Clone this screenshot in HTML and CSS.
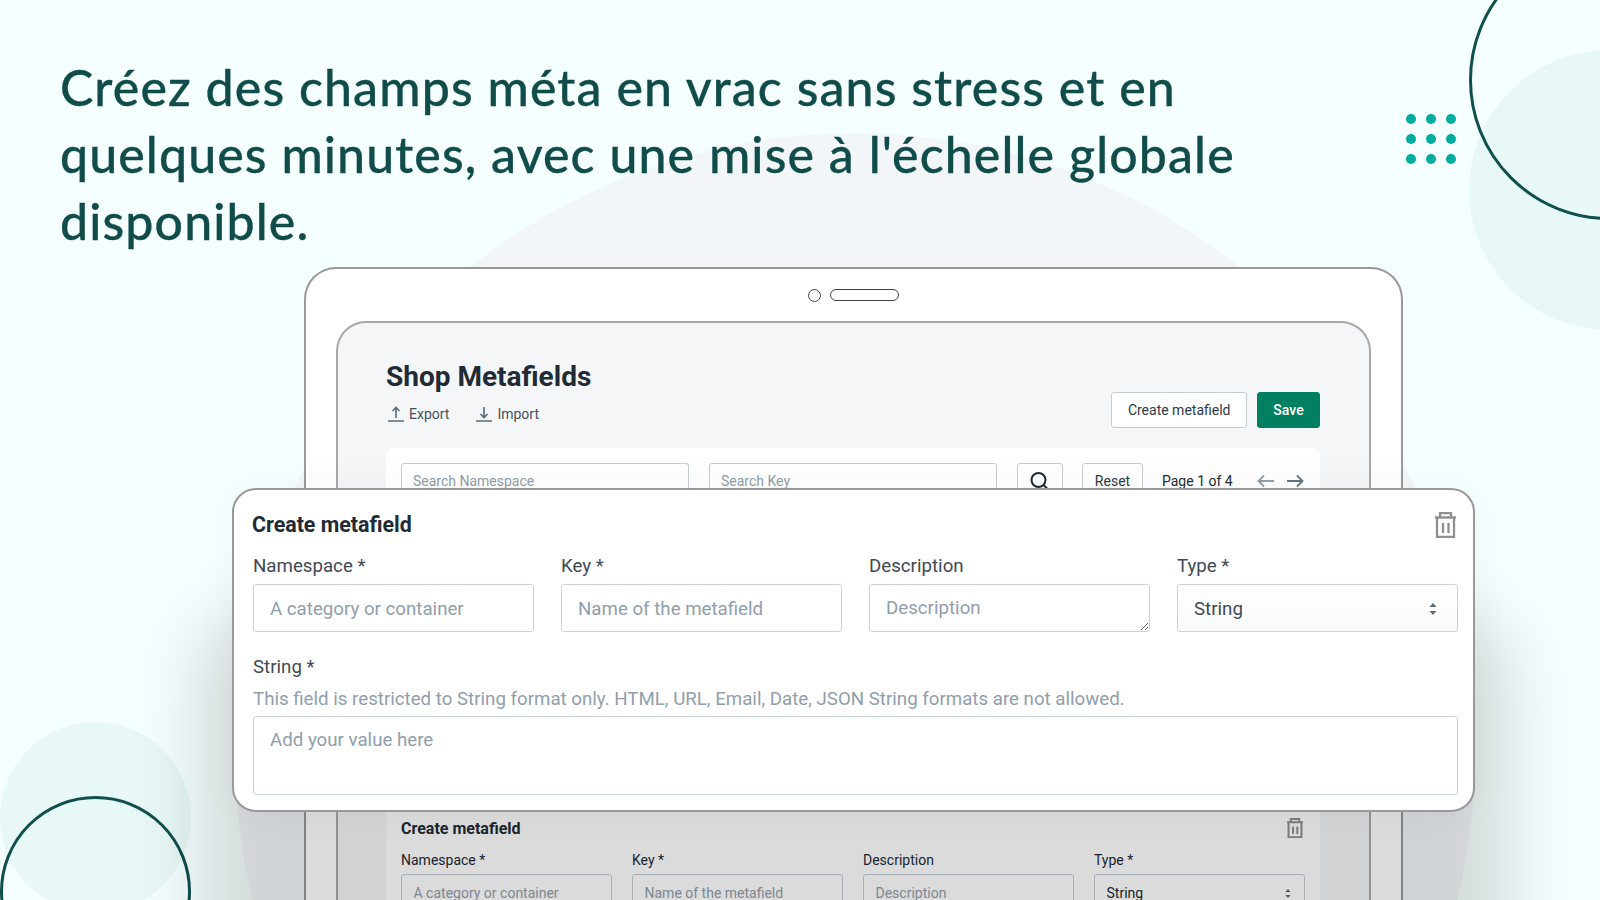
FILE: index.html
```html
<!DOCTYPE html>
<html lang="fr">
<head>
<meta charset="utf-8">
<title>Créez des champs méta</title>
<link rel="stylesheet" href="styles.css">
</head>
<body>
<main class="stage">
  <div class="blob blob-center"></div>
  <div class="blob blob-tr"></div>
  <div class="ring ring-tr"></div>
  <div class="blob blob-bl"></div>
  <div class="ring ring-bl"></div>
  <div class="dots">
    <i></i><i></i><i></i><i></i><i></i><i></i><i></i><i></i><i></i>
  </div>

  <h1 class="headline">Créez des champs méta en vrac sans stress et en quelques minutes, avec une mise à l'échelle globale disponible.</h1>

  <section class="device">
    <div class="notch"><span class="cam"></span><span class="speaker"></span></div>
    <div class="screen">
      <header class="page-head">
        <div>
          <h2 class="page-title">Shop Metafields</h2>
          <div class="actions">
            <span class="action">
              <svg class="action-icon" viewBox="0 0 16 16"><path d="M0 15h16M8 12V1.500M4.500 5 8 1.500 11.500 5"/></svg>Export
            </span>
            <span class="action">
              <svg class="action-icon" viewBox="0 0 16 16"><path d="M0 15h16M8 1v10.500M4.500 8 8 11.500 11.500 8"/></svg>Import
            </span>
          </div>
        </div>
        <div class="head-buttons">
          <button class="btn">Create metafield</button>
          <button class="btn btn-primary">Save</button>
        </div>
      </header>
      <div class="card">
        <div class="toolbar">
          <input class="search" placeholder="Search Namespace">
          <input class="search" placeholder="Search Key">
          <button class="btn btn-icon">
            <svg class="search-icon" viewBox="0 0 20 20"><circle cx="9.500" cy="9" r="7"/><path d="m14.500 14 4 4"/></svg>
          </button>
          <button class="btn btn-reset">Reset</button>
          <span class="pager">Page 1 of 4</span>
          <svg class="arrow arrow-off" viewBox="0 0 18 14"><path d="M17 7H1.500M7 1.500 1.500 7 7 12.500"/></svg>
          <svg class="arrow" viewBox="0 0 18 14"><path d="M1 7h15.500M11 1.500 16.500 7 11 12.500"/></svg>
        </div>
        <div class="entry">
          <div class="entry-head">
            <h3 class="entry-title">Create metafield</h3>
            <svg class="trash trash-sm" viewBox="0 0 21 26"><path d="M0 5.500h21M2 5.500V25h17V5.500M5 5.500V1.200h11v4.300M8 11v10M13.500 11v10"/></svg>
          </div>
          <div class="entry-grid">
            <label class="entry-field">Namespace *<input class="entry-input" placeholder="A category or container"></label>
            <label class="entry-field">Key *<input class="entry-input" placeholder="Name of the metafield"></label>
            <label class="entry-field">Description<input class="entry-input" placeholder="Description"></label>
            <div class="entry-field">Type *
              <div class="entry-input entry-select">String
                <svg class="updown" viewBox="0 0 8 14"><path d="M4 1 7.500 5H.5zM4 13 .5 9h7z"/></svg>
              </div>
            </div>
          </div>
        </div>
      </div>
    </div>
  </section>

  <section class="modal">
    <div class="modal-head">
      <h3 class="modal-title">Create metafield</h3>
      <svg class="trash" viewBox="0 0 21 26"><path d="M0 5.500h21M2 5.500V25h17V5.500M5 5.500V1.200h11v4.300M8 11v10M13.500 11v10"/></svg>
    </div>
    <div class="modal-grid">
      <label class="field">Namespace *<input class="control" placeholder="A category or container"></label>
      <label class="field">Key *<input class="control" placeholder="Name of the metafield"></label>
      <label class="field">Description<textarea class="control control-area" placeholder="Description"></textarea></label>
      <div class="field">Type *
        <div class="control control-select">String
          <svg class="updown" viewBox="0 0 8 14"><path d="M4 1 7.500 5H.5zM4 13 .5 9h7z"/></svg>
        </div>
      </div>
    </div>
    <label class="field field-wide">String *
      <span class="help">This field is restricted to String format only. HTML, URL, Email, Date, JSON String formats are not allowed.</span>
      <textarea class="control control-value" placeholder="Add your value here"></textarea>
    </label>
  </section>
</main>
</body>
</html>
```
FILE: styles.css
```css
* { box-sizing: border-box; }
html, body { margin: 0; padding: 0; }
body { font-family: Roboto, "Liberation Sans", sans-serif; color: #212b36; }

.stage {
  position: relative;
  width: 1600px;
  height: 900px;
  overflow: hidden;
  background: #f6ffff;
  padding-top: 54px;
}

/* decoration */
.blob, .ring { position: absolute; border-radius: 50%; }
.blob-center { left: 235px; top: 133px; width: 1240px; height: 1240px; background: #f2f6f9; }
.blob-tr { left: 1469px; top: 50px; width: 280px; height: 280px; background: #e7f8f7; }
.ring-tr { left: 1469px; top: -60px; width: 280px; height: 280px; border: 3px solid #0f4f4c; }
.blob-bl { left: 0; top: 722px; width: 191px; height: 191px; background: #e7f8f7; }
.ring-bl { left: 0; top: 796px; width: 191px; height: 191px; border: 3px solid #0f4f4c; }
.dots {
  position: absolute;
  left: 1406px;
  top: 114px;
  display: grid;
  grid-template-columns: repeat(3, 10px);
  gap: 9.800px;
}
.dots i { width: 10px; height: 10px; border-radius: 50%; background: #00ac9f; }

/* headline */
.headline {
  position: relative;
  margin: 0 0 0 60px;
  width: 1240px;
  font-family: Lato, "Open Sans", sans-serif;
  font-weight: 500;
  font-size: 50px;
  line-height: 67px;
  letter-spacing: 1.120px;
  -webkit-text-stroke: .3px #0f4c4a;
  color: #0f4c4a;
}

/* device */
.device {
  position: relative;
  width: 1099px;
  height: 700px;
  margin: 12px 0 0 304px;
  padding: 0 30px;
  background: #fff;
  border: 2px solid #999;
  border-bottom: 0;
  border-radius: 32px 32px 0 0;
}
.notch { height: 52px; display: flex; align-items: center; justify-content: center; gap: 9px; }
.cam { width: 13px; height: 13px; border: 1.500px solid #3c4448; border-radius: 50%; }
.speaker { width: 69px; height: 12px; border: 1.500px solid #3c4448; border-radius: 6px; }
.screen {
  height: 640px;
  padding: 36px 49px 0 48px;
  background: #f5f6f8;
  border: 2px solid #a8a8a8;
  border-bottom: 0;
  border-radius: 30px 30px 0 0;
}
.page-head { display: flex; justify-content: space-between; align-items: flex-end; margin-bottom: 20px; }
.page-title { margin: 1px 0 0; font-size: 28px; line-height: 34px; font-weight: 700; color: #212b36; }
.actions { display: flex; gap: 25px; margin: 8px 0 2px; }
.action { display: flex; align-items: center; gap: 5px; height: 24px; padding-left: 2px; font-size: 14px; color: #454f5b; }
.action-icon { width: 16px; height: 16px; fill: none; stroke: #5c6b7a; stroke-width: 1.600; }
.head-buttons { display: flex; gap: 10px; }
.btn {
  flex: none;
  height: 36px;
  padding: 0 15.500px;
  border: 1px solid #c4cdd5;
  border-radius: 3px;
  background: #fff;
  font: 400 14px Roboto, sans-serif;
  color: #2f3a45;
}
.btn-primary { width: 63px; padding: 0; background: #008060; border-color: #008060; color: #fff; font-weight: 500; }

/* list card */
.card { height: 560px; padding: 15px; background: #fff; border-radius: 8px; }
.toolbar { display: flex; align-items: center; height: 36px; }
.search {
  flex: none;
  width: 288px;
  height: 36px;
  margin-right: 20px;
  padding: 0 11px;
  border: 1px solid #c4cdd5;
  border-radius: 3px;
  font: 400 14px Roboto, sans-serif;
}
.search::placeholder, .entry-input::placeholder { color: #919eab; opacity: 1; }
.btn-icon { width: 46px; padding: 0 2px 0 0; margin-right: 19px; display: flex; align-items: center; justify-content: center; }
.search-icon { width: 20px; height: 20px; fill: none; stroke: #212b36; stroke-width: 2; }
.btn-reset { width: 61px; padding: 0; margin-right: 19px; }
.pager { flex: none; width: 95px; font-size: 14px; color: #212b36; }
.arrow { flex: none; width: 18px; height: 14px; margin-right: 11px; fill: none; stroke: #637381; stroke-width: 1.800; }
.arrow-off { stroke: #919eab; }

.entry { margin-top: 317px; }
.entry-head { display: flex; justify-content: space-between; align-items: center; height: 24px; }
.entry-title { margin: 0; font-size: 16px; font-weight: 700; }
.trash { width: 21px; height: 26px; fill: none; stroke: #8f8f8f; stroke-width: 2.300; }
.trash-sm { width: 16px; height: 20px; margin-right: 2px; stroke-width: 2.600; }
.entry-grid { display: grid; grid-template-columns: repeat(4, 1fr); gap: 20px; margin-top: 10px; }
.entry-field { display: block; font-size: 14px; line-height: 20px; color: #212b36; }
.entry-input {
  display: flex;
  align-items: center;
  position: relative;
  width: 100%;
  height: 38px;
  margin-top: 4px;
  padding: 0 11.500px;
  border: 1px solid #c4cdd5;
  border-radius: 3px;
  background: #fff;
  font: 400 14px Roboto, sans-serif;
  color: #212b36;
}
.entry-select { justify-content: space-between; }
.entry-select .updown { width: 6px; height: 11px; margin-right: 2px; }

/* modal */
.modal {
  position: absolute;
  left: 232px;
  top: 488px;
  width: 1243px;
  height: 324px;
  padding: 21px 15px 0 19px;
  background: #fff;
  border: 2px solid #999;
  border-radius: 24px;
  box-shadow: 0 160px 70px 35px rgba(0, 0, 0, .14), 0 0 40px rgba(0, 0, 0, .04);
}
.modal-head { display: flex; justify-content: space-between; align-items: center; height: 27px; padding-right: 2px; }
.modal-title { margin: 0 0 0 -1px; font-size: 21.400px; font-weight: 700; color: #212b36; }
.modal-grid { display: grid; grid-template-columns: repeat(4, 281px); gap: 27px; margin-top: 17px; }
.field { display: block; font-size: 18.700px; line-height: 22px; color: #3f4a54; }
.field-wide { margin-top: 24px; }
.control {
  display: block;
  width: 100%;
  height: 48px;
  margin-top: 7px;
  padding: 1px 16px 0;
  border: 1.500px solid #c9d3da;
  border-radius: 3px;
  background: #fff;
  font: 400 18.700px Roboto, sans-serif;
  color: #212b36;
}
.control::placeholder { color: #919eab; opacity: 1; }
.control-area { padding-top: 12px; line-height: 22px; resize: both; }
.control-select {
  display: flex;
  align-items: center;
  justify-content: space-between;
  background: linear-gradient(#fff, #f9fafb);
  color: #3f4a54;
}
.updown { width: 8px; height: 14px; margin-right: 4px; fill: #5c6b7a; }
.help { display: block; margin-top: 10px; color: #919eab; }
.control-value { height: 79px; margin-top: 6px; resize: none; padding-top: 12px; }
```
